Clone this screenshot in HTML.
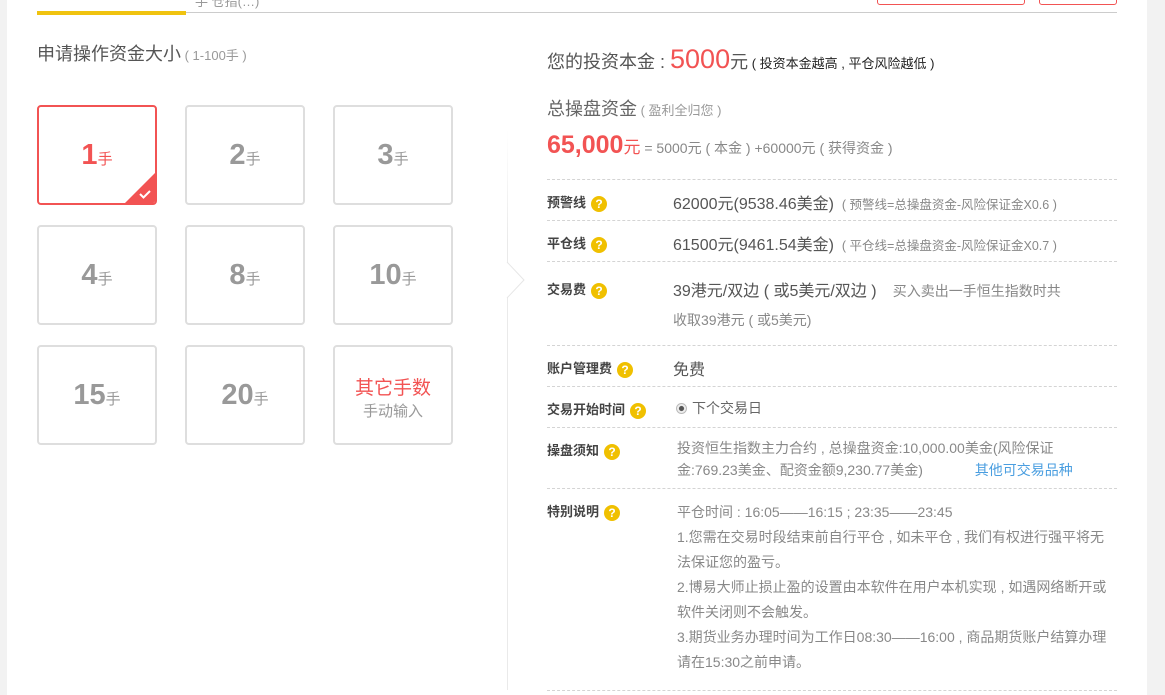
<!DOCTYPE html>
<html><head><meta charset="utf-8"><style>
*{margin:0;padding:0;box-sizing:border-box}
body{width:1165px;height:695px;overflow:hidden;background:#fff;font-family:"Liberation Sans","Noto Sans CJK SC",sans-serif;position:relative;color:#666}
.a{position:absolute;white-space:nowrap}
.box{position:absolute;width:120px;height:100px;border:2px solid #dedede;border-radius:4px;text-align:center;line-height:96px;color:#999;font-size:15px;overflow:hidden}
.box b{font-size:29px;font-weight:bold}
.sel{border-color:#f25353;color:#f25353}
.dl{position:absolute;left:547px;width:570px;border-top:1px dashed #d4d4d4}
.lb{position:absolute;left:547px;font-size:13px;font-weight:bold;color:#444;white-space:nowrap}
.q{display:inline-block;width:16px;height:16px;border-radius:50%;background:#f0c000;color:#fff;font-size:12px;line-height:16px;text-align:center;vertical-align:middle;margin-left:5px;font-weight:bold}
.v{position:absolute;left:673px;font-size:16px;color:#555;white-space:nowrap}
.s{color:#888;font-size:12.5px}
.t{position:absolute;left:677px;font-size:14px;color:#888;line-height:25px;white-space:nowrap}
</style></head><body>
<div class="a" style="left:0;top:0;width:7px;height:695px;background:#f2f2f2"></div>
<div class="a" style="left:1147px;top:0;width:18px;height:695px;background:#f2f2f2"></div>
<div class="a" style="left:37px;top:12px;width:1080px;height:1px;background:#ccc"></div>
<div class="a" style="left:37px;top:11px;width:149px;height:4px;background:#f0c30f"></div>
<div class="a" style="left:195px;top:-9px;font-size:13px;color:#999">手 仓指(…)</div>
<div class="a" style="left:877px;top:-4px;width:148px;height:9px;border:1px solid #f25353;border-radius:3px"></div>
<div class="a" style="left:1039px;top:-4px;width:78px;height:9px;border:1px solid #f25353;border-radius:3px"></div>

<div class="a" style="left:37px;top:40px;font-size:18px;color:#555">申请操作资金大小<span style="font-size:13px;color:#999"> ( 1-100手 )</span></div>

<div class="box sel" style="left:37px;top:105px"><b>1</b>手
<div class="a" style="right:-2px;bottom:-2px;width:0;height:0;border-left:34px solid transparent;border-bottom:34px solid #f25353"></div>
<svg class="a" style="right:4px;bottom:4px" width="12" height="10" viewBox="0 0 12 10"><path d="M1 5l3.5 3.5L11 2" stroke="#fff" stroke-width="2" fill="none"/></svg></div>
<div class="box" style="left:185px;top:105px"><b>2</b>手</div>
<div class="box" style="left:333px;top:105px"><b>3</b>手</div>
<div class="box" style="left:37px;top:225px"><b>4</b>手</div>
<div class="box" style="left:185px;top:225px"><b>8</b>手</div>
<div class="box" style="left:333px;top:225px"><b>10</b>手</div>
<div class="box" style="left:37px;top:345px"><b>15</b>手</div>
<div class="box" style="left:185px;top:345px"><b>20</b>手</div>
<div class="box" style="left:333px;top:345px;line-height:normal"><div style="margin-top:26px;font-size:19px;color:#f25353">其它手数</div><div style="font-size:15px;color:#999">手动输入</div></div>

<div class="a" style="left:507px;top:130px;width:1px;height:560px;background:linear-gradient(#fff,#eaeaea 20%,#eaeaea)"></div>
<svg class="a" style="left:506px;top:262px" width="20" height="40"><path d="M1 0L18 18L1 36" fill="#fff" stroke="#e6e6e6"/></svg>

<div class="a" style="left:547px;top:44px;font-size:18px;color:#555">您的投资本金 : <span style="font-size:27px;color:#f25353">5000</span>元<span style="font-size:13px;color:#222"> ( 投资本金越高 , 平仓风险越低 )</span></div>
<div class="a" style="left:547px;top:95px;font-size:18px;color:#666">总操盘资金<span style="font-size:13px;color:#999"> ( 盈利全归您 )</span></div>
<div class="a" style="left:547px;top:131px;font-size:14px;color:#888"><span style="font-size:25px;font-weight:bold;color:#f25353">65,000</span><span style="font-size:17px;color:#f25353">元</span> = 5000元 ( 本金 ) +60000元 ( 获得资金 )</div>

<div class="dl" style="top:179px"></div>
<div class="lb" style="top:192px">预警线<span class="q">?</span></div>
<div class="v" style="top:190px">62000元(9538.46美金) <span class="s">&nbsp;( 预警线=总操盘资金-风险保证金X0.6 )</span></div>
<div class="dl" style="top:220px"></div>
<div class="lb" style="top:233px">平仓线<span class="q">?</span></div>
<div class="v" style="top:231px">61500元(9461.54美金) <span class="s">&nbsp;( 平仓线=总操盘资金-风险保证金X0.7 )</span></div>
<div class="dl" style="top:261px"></div>
<div class="lb" style="top:279px">交易费<span class="q">?</span></div>
<div class="v" style="top:277px">39港元/双边 ( 或5美元/双边 ) <span style="font-size:14px;color:#888">&nbsp;&nbsp;&nbsp;买入卖出一手恒生指数时共</span></div>
<div class="v" style="top:310px;font-size:14px;color:#888">收取39港元 ( 或5美元)</div>
<div class="dl" style="top:345px"></div>
<div class="lb" style="top:358px">账户管理费<span class="q">?</span></div>
<div class="v" style="top:356px">免费</div>
<div class="dl" style="top:386px"></div>
<div class="lb" style="top:399px">交易开始时间<span class="q">?</span></div>
<div class="v" style="top:398px;left:676px;font-size:14px;color:#666"><span style="display:inline-block;width:11px;height:11px;border-radius:50%;border:1px solid #bbb;background:radial-gradient(#555 35%,#eee 45%);vertical-align:-1px;margin-right:5px"></span>下个交易日</div>
<div class="dl" style="top:427px"></div>
<div class="lb" style="top:440px">操盘须知<span class="q">?</span></div>
<div class="t" style="top:437px;color:#888;line-height:22px">投资恒生指数主力合约 , 总操盘资金:10,000.00美金(风险保证<br>金:769.23美金、配资金额9,230.77美金) <span style="color:#4a9ee0;margin-left:48px">其他可交易品种</span></div>
<div class="dl" style="top:488px"></div>
<div class="lb" style="top:501px">特别说明<span class="q">?</span></div>
<div class="t" style="top:500px">平仓时间 : 16:05——16:15 ; 23:35——23:45<br>1.您需在交易时段结束前自行平仓 , 如未平仓 , 我们有权进行强平将无<br>法保证您的盈亏。<br>2.博易大师止损止盈的设置由本软件在用户本机实现 , 如遇网络断开或<br>软件关闭则不会触发。<br>3.期货业务办理时间为工作日08:30——16:00 , 商品期货账户结算办理<br>请在15:30之前申请。</div>
<div class="dl" style="top:690px"></div>
</body></html>
